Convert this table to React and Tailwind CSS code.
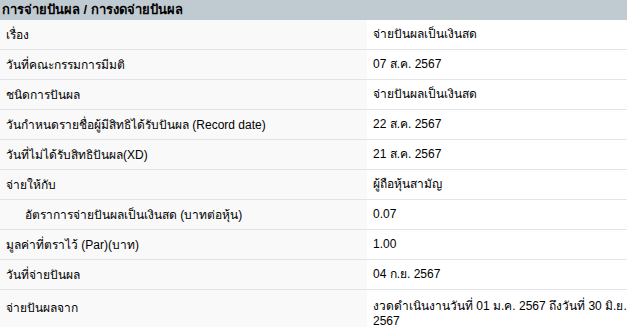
const ROWS = [
  { label: 'เรื่อง', value: 'จ่ายปันผลเป็นเงินสด' },
  { label: 'วันที่คณะกรรมการมีมติ', value: '07 ส.ค. 2567' },
  { label: 'ชนิดการปันผล', value: 'จ่ายปันผลเป็นเงินสด' },
  { label: 'วันกำหนดรายชื่อผู้มีสิทธิได้รับปันผล (Record date)', value: '22 ส.ค. 2567' },
  { label: 'วันที่ไม่ได้รับสิทธิปันผล(XD)', value: '21 ส.ค. 2567' },
  { label: 'จ่ายให้กับ', value: 'ผู้ถือหุ้นสามัญ' },
  { label: 'อัตราการจ่ายปันผลเป็นเงินสด (บาทต่อหุ้น)', value: '0.07', indent: true },
  { label: 'มูลค่าที่ตราไว้ (Par)(บาท)', value: '1.00' },
  { label: 'วันที่จ่ายปันผล', value: '04 ก.ย. 2567' },
  {
    label: 'จ่ายปันผลจาก',
    value: (
      <>
        งวดดำเนินงานวันที่ 01 ม.ค. 2567 ถึงวันที่ 30 มิ.ย.
        <br />
        2567
      </>
    ),
    tall: true,
  },
];

export default function App() {
  return (
    <div className="w-[627px] bg-white text-[12px] text-black font-['Liberation_Sans','Noto_Sans',sans-serif]">
      <div className="h-[20px] bg-[#c0cbd1] px-[2px] flex items-center font-bold text-[13px] text-black">
        การจ่ายปันผล / การงดจ่ายปันผล
      </div>
      {ROWS.map((r, i) => (
        <div key={i} className={`flex ${i > 0 ? 'border-t border-[#e2e4e8]' : ''}`}>
          <div
            className={`w-[367px] shrink-0 bg-[#f9f9f9] flex ${r.tall ? 'items-start pt-[9px] min-h-[38px]' : 'items-center h-[29px]'} ${r.indent ? 'pl-[25px]' : 'pl-[6px]'}`}
          >
            {r.label}
          </div>
          <div className={`flex-1 pl-[6px] leading-[15px] flex ${r.tall ? 'items-start pt-[9px]' : 'items-center h-[29px]'}`}>
            <div>{r.value}</div>
          </div>
        </div>
      ))}
    </div>
  );
}
